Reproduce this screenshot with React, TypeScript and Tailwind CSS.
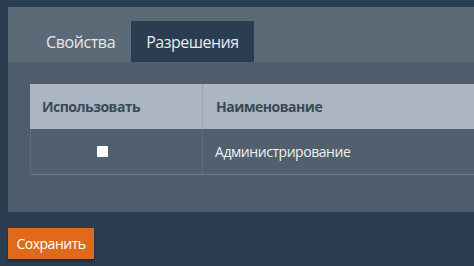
import React from "react";

export default function App() {
  const font = { fontFamily: '"Open Sans", "Noto Sans", sans-serif' };
  return (
    <div className="w-[474px] h-[266px] bg-[#2b3d50] overflow-hidden pt-[7px] pl-[8px]" style={font}>
      <div className="w-[520px]">
        <div className="h-[55px] bg-[#5c6a78] flex items-end pl-[22px]">
          <div className="h-[41px] px-[16px] flex items-center text-[16px] tracking-[-0.4px] text-[#e4e8ec]">Свойства</div>
          <div className="h-[41px] px-[15px] flex items-center text-[16px] tracking-[-0.5px] text-[#e8ecef] bg-[#2b3d50]">Разрешения</div>
        </div>
        <div className="h-[150px] bg-[#4e5c6b] pt-[22px] pl-[22px]">
          <div className="border-b border-[#6e7a87]">
            <div className="flex h-[45px] bg-[#abb6c2] text-[#3c4956] font-bold text-[14px] tracking-[-0.5px]">
              <div className="w-[173px] flex items-center pl-[12px] border-r border-[#9aa5b1]">Использовать</div>
              <div className="flex-1 flex items-center pl-[13px]">Наименование</div>
            </div>
            <div className="flex h-[45px] bg-[#515f6e] text-[#eef1f3] text-[14px] tracking-[-0.45px] border-l border-[#5f6b78]">
              <div className="w-[172px] flex items-center pl-[66px] border-r border-[#5f6b78]">
                <div className="w-[11px] h-[11px] bg-white rounded-[1px]" />
              </div>
              <div className="flex-1 flex items-center pl-[12px]">Администрирование</div>
            </div>
          </div>
        </div>
      </div>
      <div className="mt-[16px] w-[86px] h-[31px] bg-[#df6a1b] text-white text-[14px] tracking-[-0.5px] flex items-center justify-center shadow-[0_2px_2px_rgba(0,0,0,0.35)]">
        Сохранить
      </div>
    </div>
  );
}
